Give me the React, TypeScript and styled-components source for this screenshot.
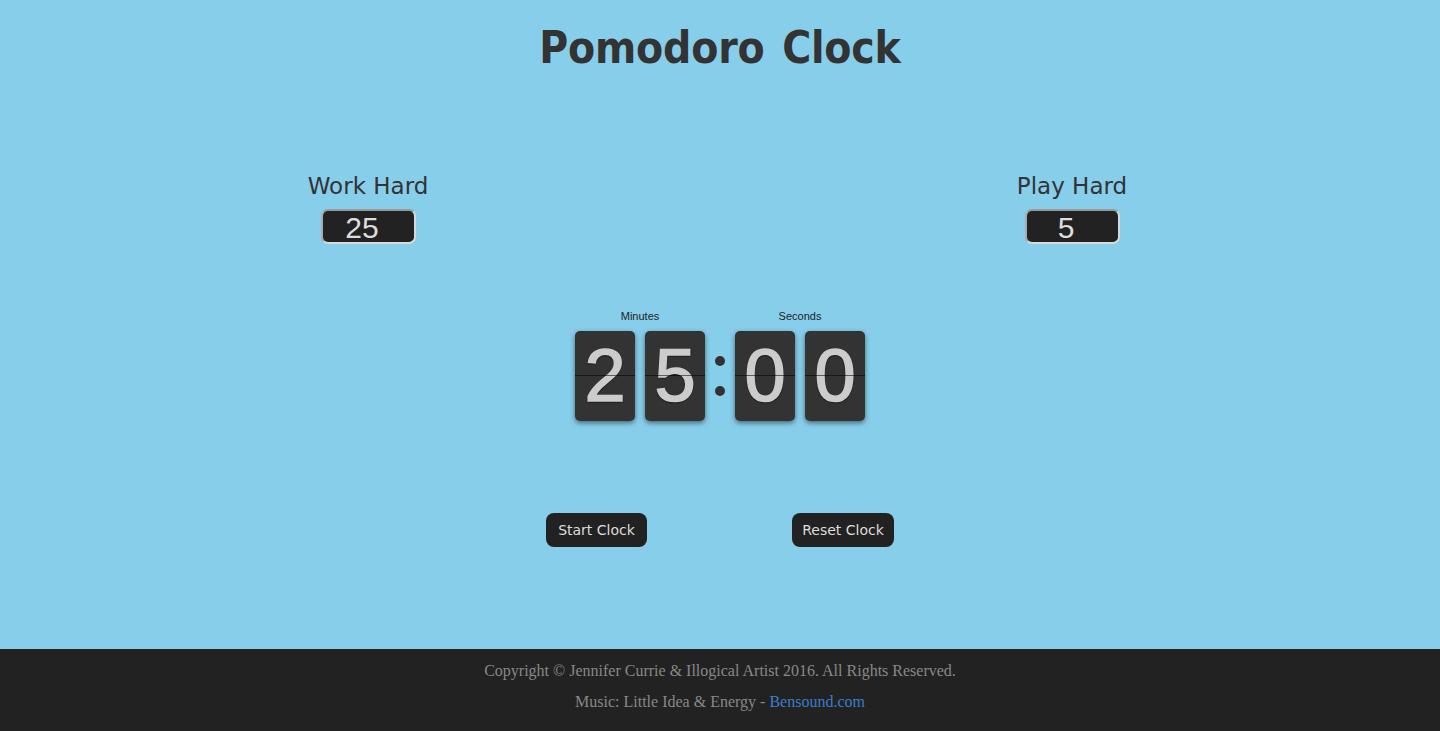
import React from "react";
import styled, { createGlobalStyle } from "styled-components";

const Global = createGlobalStyle`
  html, body { margin: 0; padding: 0; }
  body { background: #87ceeb; font-family: "DejaVu Sans", sans-serif; }
`;

const Page = styled.div`
  min-height: 731px;
  display: flex;
  flex-direction: column;
`;

const Main = styled.main`
  height: 649px;
  display: flex;
  flex-direction: column;
  align-items: center;
`;

const Title = styled.h1`
  margin: 18px 0 0;
  font-family: "DejaVu Sans Condensed", "DejaVu Sans", sans-serif;
  font-stretch: condensed;
  font-weight: bold;
  font-size: 44px;
  line-height: 60px;
  color: #333;
  letter-spacing: -0.2px;
  word-spacing: 4px;
`;

const SettingsRow = styled.div`
  box-sizing: border-box;
  width: 100%;
  padding: 0 268px;
  margin-top: 93px;
  display: flex;
  justify-content: space-between;
`;

const Setting = styled.div`
  width: 200px;
  display: flex;
  flex-direction: column;
  align-items: center;
`;

const SettingLabel = styled.div`
  font-family: "DejaVu Sans", sans-serif;
  font-size: 23px;
  line-height: 30px;
  color: #333;
`;

const SettingInput = styled.div`
  margin-top: 8px;
  box-sizing: border-box;
  width: 95px;
  height: 35px;
  padding-right: 12px;
  background: #222;
  border: 2px solid #d8d8d8;
  border-top-color: #999;
  border-left-color: #aaa;
  border-radius: 7px;
  color: #ddd;
  font-family: "Liberation Sans", Arial, sans-serif;
  font-size: 30px;
  line-height: 33px;
  text-align: center;
`;

const Clock = styled.div`
  margin-top: 65px;
  display: flex;
  align-items: flex-start;
  gap: 10px;
`;

const Group = styled.div`
  display: flex;
  flex-direction: column;
  align-items: center;
`;

const GroupLabel = styled.div`
  font-family: "Liberation Sans", Arial, sans-serif;
  font-size: 11px;
  line-height: 14px;
  color: #222;
  margin-bottom: 8px;
`;

const Cards = styled.div`
  display: flex;
  gap: 10px;
`;

const Card = styled.div`
  position: relative;
  width: 60px;
  height: 90px;
  background: #333;
  border-radius: 5px;
  box-shadow: 0 2px 5px rgba(0, 0, 0, 0.5);
  color: #ccc;
  font-family: "Liberation Sans", Arial, sans-serif;
  font-weight: normal;
  font-size: 74px;
  line-height: 90px;
  text-align: center;
  -webkit-text-stroke: 1.5px #ccc;
  text-shadow: 0 1px 2px #000;
  &::after {
    content: "";
    position: absolute;
    left: 0;
    right: 0;
    top: 44px;
    height: 1px;
    background: rgba(0, 0, 0, 0.55);
  }
`;

const Colon = styled.div`
  height: 90px;
  margin-top: 22px;
  width: 10px;
  display: flex;
  flex-direction: column;
  align-items: center;
  justify-content: center;
  gap: 20px;
  &::before,
  &::after {
    content: "";
    width: 10px;
    height: 10px;
    flex: none;
    border-radius: 50%;
    background: #323232;
  }
`;

const Buttons = styled.div`
  margin-top: 92px;
  display: flex;
  gap: 145px;
`;

const Button = styled.button<{ w: number }>`
  box-sizing: border-box;
  width: ${(p) => p.w}px;
  height: 34px;
  background: #222;
  border: none;
  border-radius: 8px;
  color: #ddd;
  font-family: "DejaVu Sans", sans-serif;
  font-size: 14px;
  padding: 0;
`;

const Footer = styled.footer`
  flex: 1;
  background: #222;
  display: flex;
  flex-direction: column;
  align-items: center;
  padding-top: 12px;
  font-family: "Liberation Serif", Georgia, serif;
  font-size: 16px;
  color: #888;
  gap: 11px;
`;

const FootLine = styled.div`
  line-height: 20px;
`;

const Link = styled.a`
  color: #3a7dcc;
  text-decoration: none;
`;

export default function App() {
  return (
    <Page>
      <Global />
      <Main>
        <Title>Pomodoro Clock</Title>
        <SettingsRow>
          <Setting>
            <SettingLabel>Work Hard</SettingLabel>
            <SettingInput>25</SettingInput>
          </Setting>
          <Setting>
            <SettingLabel>Play Hard</SettingLabel>
            <SettingInput>5</SettingInput>
          </Setting>
        </SettingsRow>
        <Clock>
          <Group>
            <GroupLabel>Minutes</GroupLabel>
            <Cards>
              <Card>2</Card>
              <Card>5</Card>
            </Cards>
          </Group>
          <Colon />
          <Group>
            <GroupLabel>Seconds</GroupLabel>
            <Cards>
              <Card>0</Card>
              <Card>0</Card>
            </Cards>
          </Group>
        </Clock>
        <Buttons>
          <Button w={101}>Start Clock</Button>
          <Button w={102}>Reset Clock</Button>
        </Buttons>
      </Main>
      <Footer>
        <FootLine>Copyright © Jennifer Currie &amp; Illogical Artist 2016. All Rights Reserved.</FootLine>
        <FootLine>
          Music: Little Idea &amp; Energy - <Link href="#">Bensound.com</Link>
        </FootLine>
      </Footer>
    </Page>
  );
}
